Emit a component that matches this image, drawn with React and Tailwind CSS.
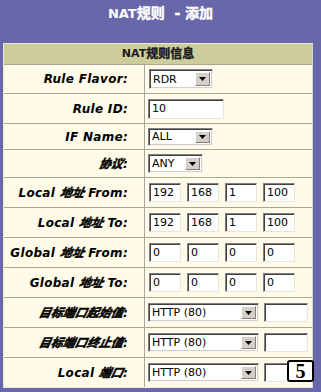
import React from "react";

const F = { fontFamily: "'DejaVu Sans', 'Noto Sans CJK SC', sans-serif" };

function Arrow() {
  return (
    <svg width="7" height="4" viewBox="0 0 7 4">
      <path d="M0 0 H7 L3.5 4 Z" fill="#000" />
    </svg>
  );
}

function Sel({ w, h, text }) {
  return (
    <div
      className={`${w} ${h} flex items-stretch bg-white border border-t-[#808080] border-l-[#808080] border-r-[#f4f4f0] border-b-[#f4f4f0] shadow-[inset_1px_1px_0_#404040,inset_-1px_-1px_0_#d4d0c8]`}
    >
      <div className="flex-1 flex items-center pl-[3px] text-[11px] text-black leading-none">{text}</div>
      <div className="w-[15px] my-[2px] mr-[2px] bg-[#d4d0c8] border border-t-white border-l-white border-r-[#808080] border-b-[#808080] flex items-center justify-center">
        <Arrow />
      </div>
    </div>
  );
}

function Inp({ w, h, text }) {
  return (
    <div
      className={`${w} ${h} flex items-center bg-white border border-t-[#808080] border-l-[#808080] border-r-[#e8e6dc] border-b-[#e8e6dc] shadow-[inset_1px_1px_0_#404040] pl-[3px] text-[11px] text-black leading-none`}
    >
      {text}
    </div>
  );
}

function C({ children }) {
  return (
    <span className="inline-block -skew-x-12 [-webkit-text-stroke:0.5px_black] text-[12px] tracking-normal">{children}</span>
  );
}

function Row({ h, label, children }) {
  return (
    <div className={`flex ${h} border-t border-t-[#aaa690]`}>
      <div className="w-[141px] shrink-0 border-r border-r-[#aaa690] flex items-center">
        <div className="w-full text-right pr-[16px] text-[12px] font-bold italic tracking-[0.3px] text-black whitespace-nowrap">
          {label}
        </div>
      </div>
      <div className="flex-1 flex items-center pl-[2px] border-l border-l-white">{children}</div>
    </div>
  );
}

function IP({ vals }) {
  return (
    <div className="flex gap-[6px] pl-[1px]">
      {vals.map((v, i) => (
        <Inp key={i} w="w-[32px]" h="h-[19px]" text={v} />
      ))}
    </div>
  );
}

function Port({ label }) {
  return (
    <Row h="h-[30px]" label={label}>
      <div className="flex gap-[5px]">
        <Sel w="w-[111px]" h="h-[19px]" text="HTTP (80)" />
        <Inp w="w-[44px]" h="h-[19px]" text="" />
      </div>
    </Row>
  );
}

export default function App() {
  return (
    <div className="w-[321px] h-[392px] bg-[#6767a9] relative overflow-hidden" style={F}>
      <div className="h-[27px] flex items-center justify-center text-white font-bold text-[14px] whitespace-pre">
        <span className="text-[13px]">NAT</span>
        <span className="[-webkit-text-stroke:0.4px_white]">规则  - 添加</span>
      </div>
      <div className="mt-[16px] ml-[3px] w-[310px] border border-[#ecebdc] border-r-[#d8d6c8] bg-[#fffbe8]">
        <div className="h-[20px] bg-[#cdcc9c] flex items-center justify-center text-[12px] font-bold text-[#1a1a1a]">
          <span className="text-[11px]">NAT</span>
          <span className="[-webkit-text-stroke:0.4px_#1a1a1a]">规则信息</span>
        </div>
        <Row h="h-[29px]" label="Rule Flavor:">
          <div className="pl-[1px]"><Sel w="w-[64px]" h="h-[20px]" text="RDR" /></div>
        </Row>
        <Row h="h-[30px]" label="Rule ID:">
          <Inp w="w-[76px]" h="h-[20px]" text="10" />
        </Row>
        <Row h="h-[26px]" label="IF Name:">
          <Sel w="w-[65px]" h="h-[18px]" text="ALL" />
        </Row>
        <Row h="h-[28px]" label={<><C>协议</C>:</>}>
          <Sel w="w-[55px]" h="h-[19px]" text="ANY" />
        </Row>
        <Row h="h-[30px]" label={<>Local <C>地址</C> From:</>}>
          <IP vals={["192", "168", "1", "100"]} />
        </Row>
        <Row h="h-[30px]" label={<>Local <C>地址</C> To:</>}>
          <IP vals={["192", "168", "1", "100"]} />
        </Row>
        <Row h="h-[30px]" label={<>Global <C>地址</C> From:</>}>
          <IP vals={["0", "0", "0", "0"]} />
        </Row>
        <Row h="h-[30px]" label={<>Global <C>地址</C> To:</>}>
          <IP vals={["0", "0", "0", "0"]} />
        </Row>
        <Port label={<><C>目标端口起始值</C>:</>} />
        <Port label={<><C>目标端口终止值</C>:</>} />
        <Port label={<>Local <C>端口</C>:</>} />
      </div>
      <div
        className="absolute left-[287px] top-[360px] w-[27px] h-[22px] bg-white border-2 border-black rounded-[3px] flex items-center justify-center text-[20px] font-bold text-black leading-none"
        style={{ fontFamily: "'Liberation Serif', serif" }}
      >
        5
      </div>
    </div>
  );
}
